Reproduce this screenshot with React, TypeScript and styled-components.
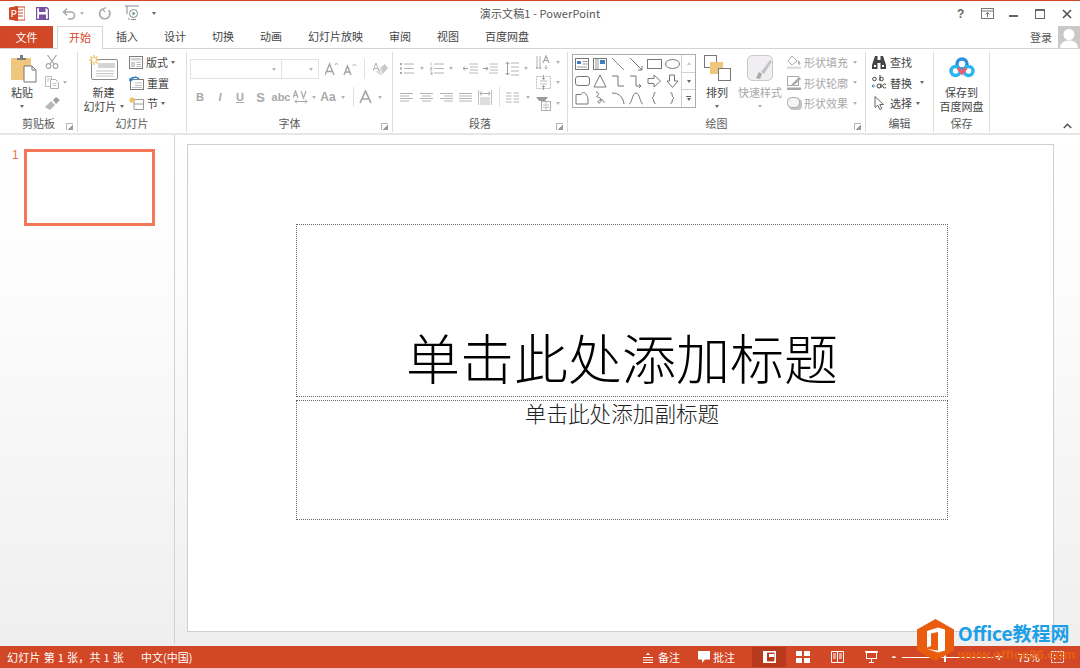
import React from "react";
import styled, { createGlobalStyle } from "styled-components";

const UI_FONT = `"Noto Sans CJK SC", "Liberation Sans", sans-serif`;
const ORANGE = "#d24726";
const MUTED = "#a8a8a8";
const INK = "#444444";

const GlobalStyle = createGlobalStyle`
  html, body { margin: 0; padding: 0; background: #fff; }
  body { font-family: ${UI_FONT}; font-size: 11px; color: ${INK}; overflow: hidden; }
  svg { display: block; flex: none; }
`;

const Window = styled.div`
  position: relative;
  width: 1080px;
  height: 668px;
  display: flex;
  flex-direction: column;
  border-top: 1px solid ${ORANGE};
  box-sizing: border-box;
  overflow: hidden;
`;

/* ---------- title bar ---------- */
const TitleBar = styled.div`
  height: 25px;
  display: grid;
  grid-template-columns: 1fr auto 1fr;
  align-items: center;
  background: #fff;
`;
const Qat = styled.div`
  display: flex;
  align-items: center;
  padding-left: 9px;
`;
const QatSlot = styled.div<{ $w: number }>`
  width: ${(p) => p.$w}px;
  display: flex;
  align-items: center;
  gap: 4px;
`;
const DocTitle = styled.div`
  font-size: 11px;
  color: #555;
  letter-spacing: 0.1px;
  padding-bottom: 1px;
`;
const WinControls = styled.div`
  display: flex;
  justify-content: flex-end;
  align-items: center;
`;
const WinButton = styled.div`
  width: 26.5px;
  display: flex;
  justify-content: center;
  color: #555;
`;
const Help = styled.span`
  font: bold 12px "Liberation Sans", sans-serif;
  color: #666;
`;

/* ---------- tabs ---------- */
const TabRow = styled.div`
  height: 23px;
  display: flex;
  align-items: stretch;
  border-bottom: 1px solid #d4d4d4;
  box-sizing: border-box;
`;
const FileTab = styled.div`
  width: 53px;
  margin-right: 4px;
  padding-bottom: 1px;
  box-sizing: border-box;
  background: ${ORANGE};
  color: #fff;
  display: flex;
  align-items: center;
  justify-content: center;
`;
const Tab = styled.div<{ $active?: boolean }>`
  padding: 0 ${(p) => (p.$active ? "11px" : "13px")} 2px;
  display: flex;
  align-items: center;
  color: ${(p) => (p.$active ? ORANGE : INK)};
  background: #fff;
  ${(p) =>
    p.$active &&
    `border: 1px solid #d4d4d4; border-bottom: none; height: 23px; box-sizing: border-box;`}
`;
const Account = styled.div`
  margin-left: auto;
  display: flex;
  align-items: center;
  gap: 6px;
  color: #555;
`;
const Avatar = styled.div`
  width: 22px;
  height: 22px;
  background: #c9c9c9;
  overflow: hidden;
`;

/* ---------- ribbon ---------- */
const Ribbon = styled.div`
  height: 84px;
  display: flex;
  background: #fff;
  box-sizing: border-box;
  padding: 3px 0 1px;
`;
const Strip = styled.div`
  height: 2px;
  background: #e6e6e6;
`;
const Group = styled.div<{ $w: number }>`
  width: ${(p) => p.$w}px;
  flex: none;
  position: relative;
  display: flex;
  flex-direction: column;
  border-right: 1px solid #dcdcdc;
  box-sizing: border-box;
`;
const GroupBody = styled.div<{ $pad?: number }>`
  flex: 1;
  display: flex;
  padding-left: ${(p) => p.$pad ?? 0}px;
  min-height: 0;
`;
const GroupLabel = styled.div`
  height: 16px;
  line-height: 15px;
  text-align: center;
  color: #5a5a5a;
  font-size: 11px;
`;
const Launcher = styled.div`
  position: absolute;
  right: 4px;
  bottom: 2px;
  width: 6px;
  height: 6px;
  border-left: 1px solid #b5b5b5;
  border-top: 1px solid #b5b5b5;
  background: linear-gradient(135deg, transparent 55%, #9a9a9a 55%);
`;
const Collapse = styled.div`
  margin-left: auto;
  align-self: flex-end;
  padding: 0 8px 3px 0;
`;
const BigButton = styled.div<{ $w: number; $muted?: boolean }>`
  width: ${(p) => p.$w}px;
  flex: none;
  display: flex;
  flex-direction: column;
  align-items: center;
  color: ${(p) => (p.$muted ? MUTED : INK)};
  line-height: 14px;
`;
const BigIcon = styled.div<{ $shift?: number }>`
  height: 30px;
  margin-top: 3px;
  padding-left: ${(p) => p.$shift ?? 0}px;
  display: flex;
  align-items: flex-start;
  justify-content: center;
`;
const BigLine = styled.div`
  height: 14px;
  display: flex;
  align-items: center;
  gap: 3px;
  white-space: nowrap;
`;
const SmallColumn = styled.div<{ $left?: number }>`
  display: flex;
  flex-direction: column;
  margin-left: ${(p) => p.$left ?? 0}px;
`;
const SmallRow = styled.div<{ $muted?: boolean; $gap?: number }>`
  height: 20.5px;
  display: flex;
  align-items: center;
  gap: ${(p) => p.$gap ?? 3}px;
  color: ${(p) => (p.$muted ? MUTED : INK)};
  white-space: nowrap;
`;
const IconSlot = styled.div<{ $w: number }>`
  width: ${(p) => p.$w}px;
  flex: none;
  display: flex;
  justify-content: center;
  align-items: center;
`;
const Caret = styled.span<{ $muted?: boolean; $left?: number }>`
  display: inline-block;
  flex: none;
  width: 0;
  height: 0;
  margin-left: ${(p) => p.$left ?? 0}px;
  border-left: 2.5px solid transparent;
  border-right: 2.5px solid transparent;
  border-top: 3px solid ${(p) => (p.$muted ? "#b5b5b5" : "#666")};
`;

/* font + paragraph */
const ToolStack = styled.div`
  display: flex;
  flex-direction: column;
  padding-top: 3px;
`;
const ToolRow = styled.div<{ $h: number }>`
  height: ${(p) => p.$h}px;
  display: flex;
  align-items: center;
`;
const Combo = styled.div<{ $w: number }>`
  width: ${(p) => p.$w}px;
  height: 20px;
  box-sizing: border-box;
  border: 1px solid #e2e2e2;
  margin-right: -1px;
  display: flex;
  align-items: center;
  justify-content: flex-end;
  padding-right: 5px;
`;
const Tool = styled.div<{ $w: number; $italic?: boolean; $under?: boolean; $size?: number; $left?: number }>`
  width: ${(p) => p.$w}px;
  margin-left: ${(p) => p.$left ?? 0}px;
  flex: none;
  display: flex;
  justify-content: center;
  align-items: center;
  color: ${MUTED};
  font-family: "Liberation Sans", sans-serif;
  font-size: ${(p) => p.$size ?? 11}px;
  font-weight: bold;
  font-style: ${(p) => (p.$italic ? "italic" : "normal")};
  text-decoration: ${(p) => (p.$under ? "underline" : "none")};
`;
const ToolSep = styled.div`
  width: 1px;
  height: 20px;
  background: #e2e2e2;
  flex: none;
`;

/* shape gallery */
const Gallery = styled.div`
  width: 124px;
  height: 54px;
  margin: 2px 0 0 4px;
  flex: none;
  box-sizing: border-box;
  border: 1px solid #ababab;
  display: flex;
`;
const GalleryGrid = styled.div`
  flex: 1;
  display: grid;
  grid-template-columns: repeat(6, 1fr);
  grid-template-rows: repeat(3, 1fr);
  justify-items: center;
  align-items: center;
`;
const GalleryScroll = styled.div`
  width: 13px;
  border-left: 1px solid #d0d0d0;
  display: flex;
  flex-direction: column;
`;
const ScrollBtn = styled.div`
  flex: 1;
  display: flex;
  flex-direction: column;
  gap: 1px;
  align-items: center;
  justify-content: center;
  border-bottom: 1px solid #d0d0d0;
  &:last-child { border-bottom: none; }
`;
const UpCaret = styled.span`
  width: 0;
  height: 0;
  border-left: 2.5px solid transparent;
  border-right: 2.5px solid transparent;
  border-bottom: 3px solid #c8c8c8;
`;
const Bar = styled.span`
  width: 5px;
  height: 1px;
  background: #666;
`;

/* ---------- workspace ---------- */
const Workspace = styled.div`
  flex: 1;
  display: flex;
  min-height: 0;
  background: linear-gradient(#ffffff 0%, #fdfdfd 25%, #efefef 100%);
`;
const ThumbPane = styled.div`
  width: 175px;
  box-sizing: border-box;
  border-right: 1px solid #d2d2d2;
  margin-bottom: 2px;
  padding: 14px 0 0 12px;
  display: flex;
  align-items: flex-start;
  flex: none;
`;
const ThumbNo = styled.div`
  width: 12px;
  font: 12px/13px "Liberation Sans", sans-serif;
  color: #e8734f;
`;
const Thumb = styled.div`
  width: 131px;
  height: 77px;
  box-sizing: border-box;
  border: 3px solid #f4775a;
  background: #fff;
`;
const Stage = styled.div`
  flex: 1;
  padding: 9px 26px 14px 12px;
  display: flex;
`;
const Slide = styled.div`
  flex: 1;
  box-sizing: border-box;
  background: #fff;
  border: 1px solid #cfcfcf;
  padding: 79px 105px 0 108px;
  display: flex;
  flex-direction: column;
  gap: 3px;
  color: #111;
`;
const TitleHolder = styled.div`
  height: 173px;
  box-sizing: border-box;
  border: 1px dotted #666;
  display: flex;
  align-items: flex-end;
  justify-content: center;
  font-size: 54px;
  line-height: 76px;
  font-weight: 300;
  padding-bottom: 1px;
  color: #000;
`;
const SubHolder = styled.div`
  height: 120px;
  box-sizing: border-box;
  border: 1px dotted #666;
  display: flex;
  justify-content: center;
  font-size: 21.6px;
  line-height: 23px;
  font-weight: 300;
  color: #222;
`;

/* ---------- status bar ---------- */
const StatusBar = styled.div`
  height: 22px;
  flex: none;
  background: ${ORANGE};
  color: #fff;
  display: flex;
  align-items: center;
  padding-left: 7px;
  font-size: 11px;
`;
const SlideCount = styled.span`
  letter-spacing: 0.3px;
`;
const Locale = styled.span`
  margin-left: 17px;
`;
const StatusRight = styled.div`
  margin-left: auto;
  display: flex;
  align-items: center;
  height: 100%;
`;
const StatusItem = styled.div<{ $w: number; $gap: number }>`
  width: ${(p) => p.$w}px;
  display: flex;
  align-items: center;
  gap: ${(p) => p.$gap}px;
`;
const ViewButton = styled.div<{ $active?: boolean }>`
  width: 34px;
  height: 20px;
  display: flex;
  align-items: center;
  justify-content: center;
  background: ${(p) => (p.$active ? "#b73a1c" : "transparent")};
`;
const Zoom = styled.div`
  display: flex;
  align-items: center;
  margin-left: 2px;
  padding-right: 16px;
`;
const ZoomSign = styled.span`
  width: 8px;
  text-align: center;
  font: bold 13px/14px "Liberation Sans", sans-serif;
`;
const ZoomTrack = styled.div`
  position: relative;
  width: 91px;
  height: 1px;
  margin: 0 2px 0 4px;
  background: #fff;
`;
const ZoomThumb = styled.div`
  position: absolute;
  left: 42px;
  top: -4px;
  width: 2px;
  height: 9px;
  background: #fff;
`;
const ZoomPct = styled.div`
  width: 37px;
  text-align: right;
  margin-right: 11px;
`;

/* ---------- watermark ---------- */
const Watermark = styled.div`
  position: absolute;
  left: 917px;
  top: 618px;
  display: flex;
  gap: 4px;
`;
const WatermarkText = styled.div`
  display: flex;
  flex-direction: column;
  padding-top: 3px;
`;
const WatermarkName = styled.div`
  color: #1d9fe8;
  font: bold 19px/22px "Noto Sans CJK SC", sans-serif;
  white-space: nowrap;
`;
const WatermarkUrl = styled.div`
  color: #e8600f;
  font: bold 13.5px/16px "Liberation Sans", sans-serif;
  margin-top: 3px;
`;

/* ---------- drawings ---------- */
const S = { fill: "none", strokeWidth: 1 };

const PptLogo = () => (
  <svg width="16" height="15" viewBox="0 0 16 15">
    <rect x="6" y="1" width="10" height="13" fill="#fff" stroke={ORANGE} />
    <path d="M9 4h5M9 7h5M9 10h5" stroke={ORANGE} />
    <path d="M0 1.5 9 0v15L0 13.5z" fill={ORANGE} />
    <path d="M3 11V4.5h2.2a1.6 1.6 0 0 1 0 3.6H3" fill="none" stroke="#fff" strokeWidth="1.2" />
  </svg>
);
const SaveIcon = () => (
  <svg width="13" height="13" viewBox="0 0 13 13">
    <path d="M.5.5h10l2 2v10H.5z" fill="#fff" stroke="#74509f" strokeWidth="1.4" />
    <rect x="3" y="1" width="6.5" height="4" fill="#74509f" />
    <rect x="3" y="7.5" width="7" height="5" fill="#74509f" />
  </svg>
);
const UndoIcon = () => (
  <svg width="14" height="13" viewBox="0 0 14 13">
    <path d="M1.5 5H9a3.5 3.5 0 0 1 0 7H6M5 1.5 1.500 5 5 8.5" fill="none" stroke="#a9a9a9" strokeWidth="1.6" />
  </svg>
);
const RedoIcon = () => (
  <svg width="13" height="13" viewBox="0 0 13 13">
    <path d="M4 2.2A5.200 5.200 0 1 0 10.500 3" fill="none" stroke="#a9a9a9" strokeWidth="1.6" />
    <path d="M8 .6 4.300 2.200 7 5" fill="none" stroke="#a9a9a9" strokeWidth="1.2" />
  </svg>
);
const TouchIcon = () => (
  <svg width="16" height="17" viewBox="0 0 16 17">
    <path d="M1 1h14M3 1v8M6 14H4" fill="none" stroke="#888" />
    <circle cx="9.5" cy="8.5" r="4" fill="#fff" stroke="#888" />
    <path d="M8.5 6.5v4l3-2z" fill="#4e9f7e" />
    <path d="M7 14.5h5" stroke="#888" />
  </svg>
);
const RibbonDisplay = () => (
  <svg width="13" height="11" viewBox="0 0 13 11">
    <rect x=".5" y=".5" width="12" height="10" fill="none" stroke="#777" />
    <path d="M.5 3h12" stroke="#777" />
    <path d="M6.5 9V4.5M4.5 6.5l2-2 2 2" fill="none" stroke="#777" />
  </svg>
);
const MinIcon = () => (
  <svg width="10" height="10" viewBox="0 0 10 10"><rect x="0" y="6" width="9" height="2" fill="#666" /></svg>
);
const MaxIcon = () => (
  <svg width="10" height="10" viewBox="0 0 10 10">
    <rect x=".5" y=".5" width="9" height="9" fill="none" stroke="#666" />
    <rect x="0" y="0" width="10" height="2" fill="#666" />
  </svg>
);
const CloseIcon = () => (
  <svg width="10" height="10" viewBox="0 0 10 10">
    <path d="M1 1l8 8M9 1l-8 8" stroke="#555" strokeWidth="1.7" />
  </svg>
);
const AvatarFigure = () => (
  <svg width="22" height="22" viewBox="0 0 22 22">
    <circle cx="11" cy="8.5" r="5.5" fill="#fff" />
    <path d="M2 22c0-5 4-7.5 9-7.5s9 2.5 9 7.5z" fill="#fff" />
  </svg>
);
const PasteIcon = () => (
  <svg width="26" height="28" viewBox="0 0 26 28">
    <rect x="0" y="3" width="20" height="22" rx="1" fill="#eec77d" />
    <path d="M6 5V3h3V0h3v3h3v2z" fill="#7d7d7d" />
    <path d="M13 11h8l4 4v12H13z" fill="#fff" stroke="#777" />
    <path d="M21 11v4h4" fill="none" stroke="#777" />
  </svg>
);
const CutIcon = () => (
  <svg width="14" height="14" viewBox="0 0 14 14">
    <path d="M2.5 0 9 9M11.5 0 5 9" stroke="#a8a8a8" strokeWidth="1.2" />
    <circle cx="3.5" cy="11" r="2.3" fill="none" stroke="#a8a8a8" strokeWidth="1.2" />
    <circle cx="10.5" cy="11" r="2.3" fill="none" stroke="#a8a8a8" strokeWidth="1.2" />
  </svg>
);
const CopyIcon = () => (
  <svg width="14" height="13" viewBox="0 0 14 13">
    <path d="M.5.5h6v10h-6z" fill="#fff" stroke="#bdbdbd" />
    <path d="M5.5 3.5h5l3 3v6h-8z" fill="#fff" stroke="#b0b0b0" />
    <path d="M2 3h3M2 5h2M7.500 7.500h4M7.500 9.500h4" stroke="#c4c4c4" />
  </svg>
);
const PainterIcon = () => (
  <svg width="15" height="13" viewBox="0 0 15 13">
    <path d="M0 10 6 4l4 4-5 5z" fill="#b9b9b9" />
    <path d="M8 3l3-3 4 3-4 4z" fill="#a0a0a0" />
  </svg>
);
const NewSlideIcon = () => (
  <svg width="29" height="25" viewBox="0 0 29 25">
    <rect x="2.5" y="4.5" width="26" height="20" rx="1.5" fill="#fff" stroke="#8c8c8c" />
    <rect x="9" y="8" width="17" height="5" fill="#d4d4d4" />
    <path d="M7 16h18M7 18.500h18M7 21h18" stroke="#c2c2c2" />
    <g stroke="#eec060" strokeWidth="1.3">
      <path d="M5 0v10M0 5h10M1.500 1.500l7 7M8.500 1.500l-7 7" />
    </g>
    <circle cx="5" cy="5" r="2" fill="#fff" />
  </svg>
);
const LayoutIcon = () => (
  <svg width="14" height="13" viewBox="0 0 14 13">
    <rect x=".5" y=".5" width="13" height="12" fill="#fff" stroke="#7c7c7c" />
    <rect x="2" y="2" width="10" height="2.5" fill="#cfcfcf" />
    <rect x="2" y="6" width="4" height="5" fill="#cfcfcf" />
    <path d="M7.500 6.500H12M7.500 8.500H12M7.500 10.500H12" stroke="#bdbdbd" />
  </svg>
);
const ResetIcon = () => (
  <svg width="15" height="14" viewBox="0 0 15 14">
    <rect x="1.5" y="3.5" width="13" height="10" fill="#fff" stroke="#7c7c7c" />
    <path d="M6 7h7M6 9.500h7M3 11.500h10" stroke="#c0c0c0" />
    <path d="M1 5a5 4 0 0 1 9-2" fill="none" stroke="#2a7fc5" strokeWidth="1.5" />
    <path d="M0 2l1 4 3-2z" fill="#2a7fc5" />
  </svg>
);
const SectionIcon = () => (
  <svg width="15" height="13" viewBox="0 0 15 13">
    <path d="M5 2.500h9.500M5 7h9.500M5 2.500v10h9.500V2.500" fill="none" stroke="#9a9a9a" />
    <g stroke="#eec060" strokeWidth="1.2"><path d="M3 0v6M0 3h6M1 1l4 4M5 1 1 5" /></g>
  </svg>
);
const GrowFont = ({ small }: { small?: boolean }) => (
  <svg width="14" height="14" viewBox="0 0 14 14">
    <path d={small ? "M1 13 4.500 4 8 13M2.400 10h4.200" : "M0 13 4.500 2 9 13M1.800 9.500h5.400"} fill="none" stroke="#a4a4a4" strokeWidth="1.4" />
    <path d={small ? "M9.500 4l2-2 2 2" : "M10 3l1.500-2L13 3"} fill="none" stroke="#b0b0b0" />
  </svg>
);
const EraserIcon = () => (
  <svg width="15" height="15" viewBox="0 0 15 15">
    <path d="M8 5l4-3 3 4-5 6z" fill="#c8c8c8" />
    <path d="M3 10 8 5l2 7-3 1z" fill="#e0dce8" />
    <path d="M0 9 3 1l3 8M1 6.500h4" fill="none" stroke="#b4b4b4" />
  </svg>
);
const FontColorA = () => (
  <svg width="13" height="14" viewBox="0 0 13 14">
    <path d="M1 13 6.500 1 12 13M3 9h7" fill="none" stroke="#a4a4a4" strokeWidth="1.7" />
  </svg>
);
const AvIcon = () => (
  <svg width="16" height="15" viewBox="0 0 16 15">
    <path d="M0 8 2.500 1 5 8M1 5.500h3M8 1l2.500 7L13 1" fill="none" stroke="#a8a8a8" strokeWidth="1.2" />
    <path d="M2 11.500h12M4 9.500l-2 2 2 2M12 9.500l2 2-2 2" fill="none" stroke="#aaa" />
  </svg>
);
const Lines = ({ rows }: { rows: [number, number][] }) => (
  <svg width="13" height="13" viewBox="0 0 13 13">
    {rows.map(([a, b], i) => (
      <path key={i} d={`M${a} ${2.5 + i * 2.5}H${b}`} stroke="#b4b4b4" />
    ))}
  </svg>
);
const BulletIcon = () => (
  <svg width="14" height="13" viewBox="0 0 14 13">
    <g fill="#a8a8a8"><rect x="0" y="1" width="2" height="2" /><rect x="0" y="5.5" width="2" height="2" /><rect x="0" y="10" width="2" height="2" /></g>
    <path d="M4 2h10M4 6.500h10M4 11h10" stroke="#b4b4b4" />
  </svg>
);
const NumberIcon = () => (
  <svg width="14" height="13" viewBox="0 0 14 13">
    <path d="M1 .5v3M.5 5.500h1.500v1.200H.5v1.300H2M.5 10H2v3H.5M.5 11.500H2" fill="none" stroke="#a8a8a8" strokeWidth=".8" />
    <path d="M4 2h10M4 6.500h10M4 11h10" stroke="#b4b4b4" />
  </svg>
);
const IndentIcon = ({ flip }: { flip?: boolean }) => (
  <svg width="15" height="11" viewBox="0 0 15 11">
    <path d="M6 1h9M7 4h8M7 7h8M6 10h9" stroke="#bcbcbc" />
    {flip ? (
      <path d="M0 5.500h5M3 3.500l2 2-2 2" fill="none" stroke="#9a9a9a" />
    ) : (
      <path d="M0 5.500h5M2 3.500l-2 2 2 2" fill="none" stroke="#9a9a9a" />
    )}
  </svg>
);
const LineSpaceIcon = () => (
  <svg width="14" height="15" viewBox="0 0 14 15">
    <path d="M6 2h8M6 6h8M6 10h8M6 14h8" stroke="#b4b4b4" />
    <path d="M2.500 1v13M.5 3l2-2 2 2M.5 12l2 2 2-2" fill="none" stroke="#9a9a9a" />
  </svg>
);
const TextDirIcon = () => (
  <svg width="15" height="15" viewBox="0 0 15 15">
    <path d="M1 1v13M4 1v13M0 12l1 2 1-2M3 12l1 2 1-2" fill="none" stroke="#b0b0b0" />
    <path d="M7 8 10 1l3 7M8 5.500h4" fill="none" stroke="#a4a4a4" strokeWidth="1.2" />
    <path d="M10 10v4M8.500 12.500l1.500 1.500 1.500-1.500" fill="none" stroke="#b0b0b0" />
  </svg>
);
const AlignTextIcon = () => (
  <svg width="15" height="15" viewBox="0 0 15 15">
    <rect x=".5" y="1.5" width="14" height="12" fill="none" stroke="#b8b8b8" strokeDasharray="2 1" />
    <path d="M4 6h7M4 9h7" stroke="#bcbcbc" />
    <path d="M7.500 0v4M6 3l1.500 1.500L9 3M7.500 15v-4M6 12l1.500-1.500L9 12" fill="none" stroke="#a0a0a0" />
  </svg>
);
const SmartArtIcon = () => (
  <svg width="15" height="15" viewBox="0 0 15 15">
    <path d="M0 1h12L9 5H3z" fill="#9c9c9c" />
    <rect x="5.5" y="5.5" width="9" height="9" fill="#fff" stroke="#b0b0b0" />
    <path d="M7 9h6M7 11.500h6M10 6v8" stroke="#c4c4c4" />
  </svg>
);
const DistributedIcon = () => (
  <svg width="14" height="15" viewBox="0 0 14 15">
    <path d="M.5 0v15M13.500 0v15" stroke="#c0c0c0" />
    <path d="M2 3.500h10M3.500 1.500l-1.500 2 1.500 2M10.500 1.500l1.500 2-1.500 2" fill="none" stroke="#aaa" />
    <path d="M2 8h10M2 10h10M2 12h10M2 14h10" stroke="#bcbcbc" />
  </svg>
);
const ColumnsIcon = () => (
  <svg width="13" height="11" viewBox="0 0 13 11">
    <path d="M0 1h5.500M7.500 1H13M0 4h5.500M7.500 4H13M0 7h5.500M7.500 7H13M0 10h5.500M7.500 10H13" stroke="#b4b4b4" />
  </svg>
);
const ArrangeIcon = () => (
  <svg width="27" height="26" viewBox="0 0 27 26">
    <rect x=".5" y=".5" width="12" height="12" fill="#fff" stroke="#777" />
    <rect x="6" y="7" width="13" height="12" fill="#eec77d" />
    <rect x="14.5" y="13.5" width="12" height="12" fill="#fff" stroke="#777" />
  </svg>
);
const QuickStyleIcon = () => (
  <svg width="27" height="27" viewBox="0 0 27 27">
    <rect x=".5" y=".5" width="25" height="25" rx="5" fill="#f1eef2" stroke="#c8c8c8" />
    <path d="M9 23l3-6 3 2-2 5z" fill="#a9a9a9" />
    <path d="M14 17l9-12 2 1.500-8 12.500z" fill="#c2c2c2" />
  </svg>
);
const FillIcon = () => (
  <svg width="15" height="14" viewBox="0 0 15 14">
    <path d="M5 1 1 6l4 4 5-4z" fill="#fff" stroke="#aaa" />
    <path d="M11 5c2 2 3 3 2 4.500-1 .8-2.500 0-2-1.500z" fill="#b4b4b4" />
    <rect x="0" y="11.5" width="14" height="2.5" fill="#dedede" />
  </svg>
);
const OutlineIcon = () => (
  <svg width="15" height="14" viewBox="0 0 15 14">
    <rect x=".5" y=".5" width="11" height="9" fill="#fff" stroke="#aaa" />
    <path d="M5 8 12 1l2 2-7 6-3 1z" fill="#a8a8a8" />
    <rect x="0" y="11.5" width="14" height="2.5" fill="#a8a8a8" />
  </svg>
);
const EffectIcon = () => (
  <svg width="15" height="13" viewBox="0 0 15 13">
    <rect x="2" y="2" width="13" height="11" rx="4" fill="#c4c4c4" />
    <rect x=".5" y=".5" width="12" height="10" rx="4" fill="#f4f4f4" stroke="#aaa" />
  </svg>
);
const FindIcon = () => (
  <svg width="14" height="13" viewBox="0 0 14 13">
    <path d="M3 0h2.500v4h3V0H11l3 9v4H8.500V7h-3v6H0V9z" fill="#444" />
    <rect x="2" y="9" width="2" height="2" fill="#fff" />
    <rect x="10" y="9" width="2" height="2" fill="#fff" />
  </svg>
);
const ReplaceIcon = () => (
  <svg width="15" height="15" viewBox="0 0 15 15">
    <circle cx="2.500" cy="4" r="1.800" fill="none" stroke="#444" />
    <path d="M8 0v6" stroke="#444" />
    <circle cx="9.500" cy="4" r="1.800" fill="none" stroke="#444" />
    <circle cx="7" cy="11" r="2" fill="none" stroke="#444" />
    <path d="M9 8.500v4.500M14 9.500a2 2 0 1 0 0 3" fill="none" stroke="#444" />
    <path d="M0 11h3M1.500 9.500 0 11l1.500 1.500" fill="none" stroke="#2a7fc5" />
  </svg>
);
const SelectIcon = () => (
  <svg width="11" height="14" viewBox="0 0 11 14">
    <path d="M1 .5v11l2.800-2.300 2 4.300 2-1-2-4h3.700z" fill="#fff" stroke="#666" />
  </svg>
);
const BaiduLogo = () => (
  <svg width="26" height="22" viewBox="0 0 26 22" style={{ marginTop: 2 }}>
    <circle cx="13" cy="7" r="5" fill="none" stroke="#2a8fe0" strokeWidth="3.4" />
    <circle cx="6.5" cy="14" r="4.500" fill="none" stroke="#29b6ec" strokeWidth="3.4" />
    <circle cx="19.5" cy="14" r="4.500" fill="none" stroke="#29b6ec" strokeWidth="3.4" />
    <path d="M9 11l4 5 4-5" fill="none" stroke="#ee5a70" strokeWidth="3.2" />
  </svg>
);
const ChevronUp = () => (
  <svg width="9" height="6" viewBox="0 0 9 6"><path d="M.8 5 4.500 1.300 8.200 5" fill="none" stroke="#555" strokeWidth="1.6" /></svg>
);
const NotesIcon = () => (
  <svg width="10" height="11" viewBox="0 0 10 11">
    <path d="M3 3l2-2.500L7 3z" fill="#fff" />
    <path d="M0 5.500h10M0 8h10M0 10.500h10" stroke="#fff" />
  </svg>
);
const CommentIcon = () => (
  <svg width="12" height="12" viewBox="0 0 12 12"><path d="M0 0h12v8.500H7L4 12V8.500H0z" fill="#fff" /></svg>
);
const NormalView = () => (
  <svg width="13" height="12" viewBox="0 0 13 12">
    <rect x=".8" y=".8" width="11.4" height="10.4" fill="none" stroke="#fff" strokeWidth="1.6" />
    <rect x="0" y="0" width="4" height="12" fill="#fff" />
    <rect x="6" y="3" width="5" height="3" fill="#fff" />
  </svg>
);
const SorterView = () => (
  <svg width="14" height="12" viewBox="0 0 14 12">
    <g fill="#fff"><rect width="6" height="5" /><rect x="8" width="6" height="5" /><rect y="7" width="6" height="5" /><rect x="8" y="7" width="6" height="5" /></g>
  </svg>
);
const ReadingView = () => (
  <svg width="13" height="12" viewBox="0 0 13 12">
    <path d="M.5.500h12v11H.5zM6.500.500v11" fill="none" stroke="#fff" />
    <path d="M2 3h3M2 5h3M2 7h3M8 3h3M8 5h3M8 7h3" stroke="#fff" />
  </svg>
);
const ShowView = () => (
  <svg width="13" height="12" viewBox="0 0 13 12">
    <path d="M0 .7h13" stroke="#fff" strokeWidth="1.4" />
    <rect x="1.5" y="1.5" width="10" height="6" fill="none" stroke="#fff" />
    <path d="M6.500 8v3M4 11.500h5" stroke="#fff" />
  </svg>
);
const FitIcon = () => (
  <svg width="13" height="12" viewBox="0 0 13 12">
    <rect x=".5" y=".5" width="12" height="11" fill="none" stroke="#fff" strokeDasharray="2 1" />
    <path d="M3 3l2 2H3zM10 3 8 5h2zM3 9l2-2H3zM10 9 8 7h2z" fill="#fff" />
  </svg>
);
const OfficeHex = () => (
  <svg width="37" height="42" viewBox="0 0 37 42">
    <path d="M18.500 0 37 10.500v21L18.500 42 0 31.500v-21z" fill="#ea5c0e" />
    <path d="M10 12 21 8.500 28 10.500v21l-7 2-11-3.500 11 1.500V13l-7 1.500V27l-4 1.500z" fill="#fff" />
  </svg>
);

const gallery: React.ReactNode[] = [
  <><rect x=".5" y="1.5" width="13" height="11" {...S} stroke="#777" /><rect x="2" y="4" width="4" height="3" fill="#3b7fc4" /><path d="M7.500 4.500h5M7.500 7h5M2 10h10" stroke="#999" /></>,
  <><rect x=".5" y="1.5" width="13" height="11" {...S} stroke="#777" /><path d="M3 2v10M5 2v10" stroke="#999" /><rect x="7" y="3" width="5" height="4" fill="#3b7fc4" /></>,
  <path d="M1 1l12 12" {...S} stroke="#888" />,
  <path d="M1 1l12 12M13 13V9M13 13H9" {...S} stroke="#777" />,
  <rect x=".5" y="2.5" width="14" height="9" {...S} stroke="#777" />,
  <ellipse cx="7.5" cy="7" rx="7" ry="4.500" {...S} stroke="#777" />,
  <rect x=".5" y="2.5" width="14" height="9" rx="2.5" {...S} stroke="#777" />,
  <path d="M7 1 13 13H1z" {...S} stroke="#777" />,
  <path d="M1 2h6v10h6" {...S} stroke="#777" />,
  <path d="M1 2h6v10h5M10 10l2 2-2 2" {...S} stroke="#777" />,
  <path d="M1 4.500h6V1l6.500 6L7 13V9.500H1z" {...S} stroke="#777" />,
  <path d="M4.500 1h5v6H13l-5.500 6.500L2 7h2.500z" {...S} stroke="#777" />,
  <path d="M1 3.500h5C7 1 10 1 11 3s2 3 2 5v5H1z" {...S} stroke="#777" />,
  <path d="M3 1c3 0 3 3 1 4s3 1 4 3-1 4-2 4-2-2 1-3 4 1 4 3" {...S} stroke="#777" />,
  <path d="M1 2c6 0 11 3 12 11" {...S} stroke="#777" />,
  <path d="M0 13C3 13 3 2 7 2s4 11 7 11" {...S} stroke="#777" />,
  <path d="M8.500 1.500c-2 0-1.500 3-2 4S5 7 5 7s1 .5 1.500 1.500 0 4 2 4" {...S} stroke="#666" />,
  <path d="M5.500 1.500c2 0 1.500 3 2 4S9 7 9 7s-1 .5-1.500 1.500 0 4-2 4" {...S} stroke="#666" />,
];

export default function App() {
  return (
    <>
      <GlobalStyle />
      <Window>
        <TitleBar>
          <Qat>
            <QatSlot $w={27}><PptLogo /></QatSlot>
            <QatSlot $w={26}><SaveIcon /></QatSlot>
            <QatSlot $w={36}><UndoIcon /><Caret $muted /></QatSlot>
            <QatSlot $w={26}><RedoIcon /></QatSlot>
            <QatSlot $w={28}><TouchIcon /></QatSlot>
            <QatSlot $w={8}><Caret /></QatSlot>
          </Qat>
          <DocTitle>演示文稿1 - PowerPoint</DocTitle>
          <WinControls>
            <WinButton><Help>?</Help></WinButton>
            <WinButton><RibbonDisplay /></WinButton>
            <WinButton><MinIcon /></WinButton>
            <WinButton><MaxIcon /></WinButton>
            <WinButton><CloseIcon /></WinButton>
          </WinControls>
        </TitleBar>

        <TabRow>
          <FileTab>文件</FileTab>
          <Tab $active>开始</Tab>
          <Tab>插入</Tab>
          <Tab>设计</Tab>
          <Tab>切换</Tab>
          <Tab>动画</Tab>
          <Tab>幻灯片放映</Tab>
          <Tab>审阅</Tab>
          <Tab>视图</Tab>
          <Tab>百度网盘</Tab>
          <Account>
            登录
            <Avatar><AvatarFigure /></Avatar>
          </Account>
        </TabRow>

        <Ribbon>
          <Group $w={78}>
            <GroupBody>
              <BigButton $w={44}>
                <BigIcon $shift={3}><PasteIcon /></BigIcon>
                <BigLine>粘贴</BigLine>
                <BigLine><Caret /></BigLine>
              </BigButton>
              <SmallColumn $left={1}>
                <SmallRow><CutIcon /></SmallRow>
                <SmallRow $gap={4}><CopyIcon /><Caret $muted /></SmallRow>
                <SmallRow><PainterIcon /></SmallRow>
              </SmallColumn>
            </GroupBody>
            <GroupLabel>剪贴板</GroupLabel>
            <Launcher />
          </Group>

          <Group $w={109}>
            <GroupBody>
              <BigButton $w={51}>
                <BigIcon><NewSlideIcon /></BigIcon>
                <BigLine>新建</BigLine>
                <BigLine>幻灯片<Caret /></BigLine>
              </BigButton>
              <SmallColumn>
                <SmallRow><LayoutIcon />版式<Caret /></SmallRow>
                <SmallRow><ResetIcon />重置</SmallRow>
                <SmallRow><SectionIcon />节<Caret /></SmallRow>
              </SmallColumn>
            </GroupBody>
            <GroupLabel>幻灯片</GroupLabel>
          </Group>

          <Group $w={206}>
            <GroupBody $pad={3}>
              <ToolStack>
                <ToolRow $h={28}>
                  <Combo $w={92}><Caret $muted /></Combo>
                  <Combo $w={38}><Caret $muted /></Combo>
                  <Tool $w={21} $left={3}><GrowFont /></Tool>
                  <Tool $w={16}><GrowFont small /></Tool>
                  <Tool $w={6} />
                  <ToolSep />
                  <Tool $w={30}><EraserIcon /></Tool>
                </ToolRow>
                <ToolRow $h={28}>
                  <Tool $w={20}>B</Tool>
                  <Tool $w={20} $italic>I</Tool>
                  <Tool $w={20} $under>U</Tool>
                  <Tool $w={21} $size={13}>S</Tool>
                  <Tool $w={20}>abc</Tool>
                  <Tool $w={20}><AvIcon /></Tool>
                  <Tool $w={5}><Caret $muted /></Tool>
                  <Tool $w={24} $size={12}>Aa</Tool>
                  <Tool $w={6}><Caret $muted /></Tool>
                  <Tool $w={7} />
                  <ToolSep />
                  <Tool $w={22}><FontColorA /></Tool>
                  <Tool $w={8}><Caret $muted /></Tool>
                </ToolRow>
              </ToolStack>
            </GroupBody>
            <GroupLabel>字体</GroupLabel>
            <Launcher />
          </Group>

          <Group $w={175}>
            <GroupBody $pad={6}>
              <ToolStack>
                <ToolRow $h={26}>
                  <Tool $w={15}><BulletIcon /></Tool>
                  <Tool $w={15}><Caret $muted /></Tool>
                  <Tool $w={15}><NumberIcon /></Tool>
                  <Tool $w={14}><Caret $muted /></Tool>
                  <Tool $w={17} $left={4}><IndentIcon /></Tool>
                  <Tool $w={17} $left={3}><IndentIcon flip /></Tool>
                  <Tool $w={15} $left={5}><LineSpaceIcon /></Tool>
                  <Tool $w={14}><Caret $muted /></Tool>
                </ToolRow>
                <ToolRow $h={32}>
                  <Tool $w={15}><Lines rows={[[0, 13], [0, 9], [0, 13], [0, 9]]} /></Tool>
                  <Tool $w={25}><Lines rows={[[0, 13], [2, 11], [0, 13], [2, 11]]} /></Tool>
                  <Tool $w={15}><Lines rows={[[0, 13], [4, 13], [0, 13], [4, 13]]} /></Tool>
                  <Tool $w={23}><Lines rows={[[0, 13], [0, 13], [0, 13], [0, 13]]} /></Tool>
                  <Tool $w={16}><DistributedIcon /></Tool>
                  <Tool $w={6} />
                  <ToolSep />
                  <Tool $w={24}><ColumnsIcon /></Tool>
                  <Tool $w={7}><Caret $muted /></Tool>
                </ToolRow>
              </ToolStack>
              <SmallColumn $left={3}>
                <SmallRow $gap={5}><TextDirIcon /><Caret $muted /></SmallRow>
                <SmallRow $gap={5}><AlignTextIcon /><Caret $muted /></SmallRow>
                <SmallRow $gap={5}><SmartArtIcon /><Caret $muted /></SmallRow>
              </SmallColumn>
            </GroupBody>
            <GroupLabel>段落</GroupLabel>
            <Launcher />
          </Group>

          <Group $w={298}>
            <GroupBody>
              <Gallery>
                <GalleryGrid>
                  {gallery.map((shape, i) => (
                    <svg key={i} width="15" height="14" viewBox="0 0 15 14">{shape}</svg>
                  ))}
                </GalleryGrid>
                <GalleryScroll>
                  <ScrollBtn><UpCaret /></ScrollBtn>
                  <ScrollBtn><Caret /></ScrollBtn>
                  <ScrollBtn><Bar /><Caret /></ScrollBtn>
                </GalleryScroll>
              </Gallery>
              <BigButton $w={42}>
                <BigIcon><ArrangeIcon /></BigIcon>
                <BigLine>排列</BigLine>
                <BigLine><Caret /></BigLine>
              </BigButton>
              <BigButton $w={44} $muted>
                <BigIcon><QuickStyleIcon /></BigIcon>
                <BigLine>快速样式</BigLine>
                <BigLine><Caret $muted /></BigLine>
              </BigButton>
              <SmallColumn $left={5}>
                <SmallRow $muted $gap={2}><FillIcon />形状填充<Caret $muted $left={3} /></SmallRow>
                <SmallRow $muted $gap={2}><OutlineIcon />形状轮廓<Caret $muted $left={3} /></SmallRow>
                <SmallRow $muted $gap={2}><EffectIcon />形状效果<Caret $muted $left={3} /></SmallRow>
              </SmallColumn>
            </GroupBody>
            <GroupLabel>绘图</GroupLabel>
            <Launcher />
          </Group>

          <Group $w={68}>
            <GroupBody $pad={6}>
              <SmallColumn>
                <SmallRow $gap={4}><IconSlot $w={14}><FindIcon /></IconSlot>查找</SmallRow>
                <SmallRow $gap={4}><IconSlot $w={14}><ReplaceIcon /></IconSlot>替换<Caret $left={4} /></SmallRow>
                <SmallRow $gap={4}><IconSlot $w={14}><SelectIcon /></IconSlot>选择<Caret /></SmallRow>
              </SmallColumn>
            </GroupBody>
            <GroupLabel>编辑</GroupLabel>
          </Group>

          <Group $w={56}>
            <GroupBody>
              <BigButton $w={55}>
                <BigIcon><BaiduLogo /></BigIcon>
                <BigLine>保存到</BigLine>
                <BigLine>百度网盘</BigLine>
              </BigButton>
            </GroupBody>
            <GroupLabel>保存</GroupLabel>
          </Group>

          <Collapse><ChevronUp /></Collapse>
        </Ribbon>
        <Strip />

        <Workspace>
          <ThumbPane>
            <ThumbNo>1</ThumbNo>
            <Thumb />
          </ThumbPane>
          <Stage>
            <Slide>
              <TitleHolder>单击此处添加标题</TitleHolder>
              <SubHolder>单击此处添加副标题</SubHolder>
            </Slide>
          </Stage>
        </Workspace>

        <StatusBar>
          <SlideCount>幻灯片 第 1 张，共 1 张</SlideCount>
          <Locale>中文(中国)</Locale>
          <StatusRight>
            <StatusItem $w={55} $gap={5}><NotesIcon />备注</StatusItem>
            <StatusItem $w={54} $gap={3}><CommentIcon />批注</StatusItem>
            <ViewButton $active><NormalView /></ViewButton>
            <ViewButton><SorterView /></ViewButton>
            <ViewButton><ReadingView /></ViewButton>
            <ViewButton><ShowView /></ViewButton>
            <Zoom>
              <ZoomSign>-</ZoomSign>
              <ZoomTrack><ZoomThumb /></ZoomTrack>
              <ZoomSign>+</ZoomSign>
              <ZoomPct>75%</ZoomPct>
              <FitIcon />
            </Zoom>
          </StatusRight>
        </StatusBar>

        <Watermark>
          <OfficeHex />
          <WatermarkText>
            <WatermarkName>Office教程网</WatermarkName>
            <WatermarkUrl>www.office26.com</WatermarkUrl>
          </WatermarkText>
        </Watermark>
      </Window>
    </>
  );
}
